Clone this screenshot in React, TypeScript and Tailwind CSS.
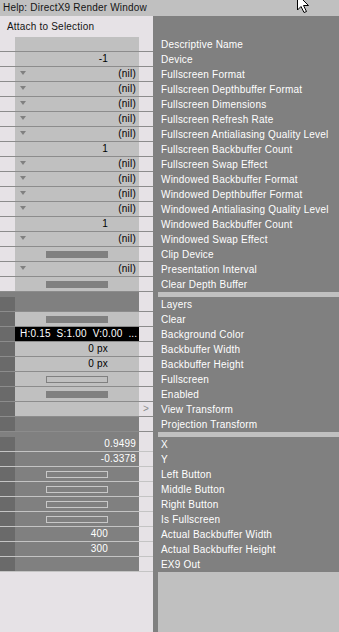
import React from "react";

type Kind =
  | { t: "empty" }
  | { t: "num"; v: string }
  | { t: "nil" }
  | { t: "bar" }
  | { t: "box" }
  | { t: "dark" }
  | { t: "color"; v: string }
  | { t: "float"; v: string }
  | { t: "link" };

type Theme = "a" | "b" | "c";

type Pin = { label: string; kind: Kind };

const section1: Pin[] = [
  { label: "Descriptive Name", kind: { t: "empty" } },
  { label: "Device", kind: { t: "num", v: "-1" } },
  { label: "Fullscreen Format", kind: { t: "nil" } },
  { label: "Fullscreen Depthbuffer Format", kind: { t: "nil" } },
  { label: "Fullscreen Dimensions", kind: { t: "nil" } },
  { label: "Fullscreen Refresh Rate", kind: { t: "nil" } },
  { label: "Fullscreen Antialiasing Quality Level", kind: { t: "nil" } },
  { label: "Fullscreen Backbuffer Count", kind: { t: "num", v: "1" } },
  { label: "Fullscreen Swap Effect", kind: { t: "nil" } },
  { label: "Windowed Backbuffer Format", kind: { t: "nil" } },
  { label: "Windowed Depthbuffer Format", kind: { t: "nil" } },
  { label: "Windowed Antialiasing Quality Level", kind: { t: "nil" } },
  { label: "Windowed Backbuffer Count", kind: { t: "num", v: "1" } },
  { label: "Windowed Swap Effect", kind: { t: "nil" } },
  { label: "Clip Device", kind: { t: "bar" } },
  { label: "Presentation Interval", kind: { t: "nil" } },
  { label: "Clear Depth Buffer", kind: { t: "bar" } },
];

const section2: Pin[] = [
  { label: "Layers", kind: { t: "dark" } },
  { label: "Clear", kind: { t: "bar" } },
  { label: "Background Color", kind: { t: "color", v: "H:0.15  S:1.00  V:0.00  ..." } },
  { label: "Backbuffer Width", kind: { t: "num", v: "0 px" } },
  { label: "Backbuffer Height", kind: { t: "num", v: "0 px" } },
  { label: "Fullscreen", kind: { t: "box" } },
  { label: "Enabled", kind: { t: "bar" } },
  { label: "View Transform", kind: { t: "link" } },
  { label: "Projection Transform", kind: { t: "dark" } },
];

const section3: Pin[] = [
  { label: "X", kind: { t: "float", v: "0.9499" } },
  { label: "Y", kind: { t: "float", v: "-0.3378" } },
  { label: "Left Button", kind: { t: "box" } },
  { label: "Middle Button", kind: { t: "box" } },
  { label: "Right Button", kind: { t: "box" } },
  { label: "Is Fullscreen", kind: { t: "box" } },
  { label: "Actual Backbuffer Width", kind: { t: "num", v: "400" } },
  { label: "Actual Backbuffer Height", kind: { t: "num", v: "300" } },
  { label: "EX9 Out", kind: { t: "empty" } },
];

// value cell of one input/output pin
const Value = ({ kind, theme }: { kind: Kind; theme: Theme }) => {
  const bg = theme === "c" ? "bg-[#808080] text-white" : "bg-[#c0c0c0] text-black";
  switch (kind.t) {
    case "num":
      return <div className={`w-[124px] flex items-center justify-end pr-[31px] ${bg}`}>{kind.v}</div>;
    case "float":
      return <div className={`w-[124px] flex items-center justify-end pr-[3px] ${bg}`}>{kind.v}</div>;
    case "nil":
      return (
        <div className={`relative w-[124px] flex items-center justify-end pr-[3px] ${bg}`}>
          <svg className="absolute left-[5px] top-[4px]" width="6" height="4" viewBox="0 0 6 4">
            <path d="M0 0 H6 L3 4 Z" fill="#808080" />
          </svg>
          (nil)
        </div>
      );
    case "bar":
      return (
        <div className={`w-[124px] flex items-center justify-center ${bg}`}>
          <div className="w-[62px] h-[7px] bg-[#808080]" />
        </div>
      );
    case "box":
      return (
        <div className={`w-[124px] flex items-center justify-center ${bg}`}>
          <div
            className={`w-[62px] h-[7px] border ${theme === "c" ? "border-[#c8c8c8]" : "border-[#808080]"}`}
          />
        </div>
      );
    case "dark":
      return <div className="w-[124px] bg-[#808080]" />;
    case "color":
      return (
        <div className="w-[124px] flex items-center pl-[5px] bg-black text-white whitespace-pre overflow-hidden">
          {kind.v}
        </div>
      );
    default:
      return <div className={`w-[124px] ${bg}`} />;
  }
};

const PinRow = ({ pin, theme, first }: { pin: Pin; theme: Theme; first?: boolean }) => {
  const strip = theme === "a" ? "bg-[#e6e2e6]" : "bg-[#6a6a6a]";
  const line = theme === "c" ? "border-[#c4c4c4]" : "border-[#8c8c8c]";
  return (
    <div className={`flex h-[15px] border-b ${line} ${first ? "" : ""}`}>
      <div className={`w-[15px] ${strip}`} />
      <Value kind={pin.kind} theme={theme} />
      <div className="w-[14px] flex items-center justify-center text-[#8c8c8c] bg-[#e6e2e6]">
        {pin.kind.t === "link" ? ">" : ""}
      </div>
    </div>
  );
};

const Separator = () => (
  <div className="flex h-[5px]">
    <div className="w-[139px] bg-[#808080]" />
    <div className="flex-1" />
  </div>
);

const LabelRow = ({ label }: { label: string }) => (
  <div className="h-[15px] flex items-center pl-[8px] whitespace-nowrap">{label}</div>
);

const LabelSeparator = () => (
  <div className="h-[5px] pl-[5px]">
    <div className="h-full bg-[#c0c0c0]" />
  </div>
);

export default function App() {
  return (
    <div
      className="relative w-[339px] h-[632px] flex flex-col overflow-hidden text-[10px] leading-none tracking-[0.2px] select-none"
      style={{ fontFamily: '"Liberation Sans", Arial, sans-serif' }}
    >
      {/* Title bar */}
      <div className="h-[16px] bg-[#c0c0c0] flex items-center pl-[3px] text-[#141414]">
        Help: DirectX9 Render Window
      </div>

      <div className="flex flex-1">
        {/* Pin values */}
        <div className="w-[153px] bg-[#e6e2e6] flex flex-col">
          <div className="h-[21px] flex items-center pl-[7px] text-[#141414]">Attach to Selection</div>
          {section1.map((p) => (
            <PinRow key={p.label} pin={p} theme="a" />
          ))}
          <Separator />
          {section2.map((p) => (
            <PinRow key={p.label} pin={p} theme="b" />
          ))}
          <Separator />
          {section3.map((p) => (
            <PinRow key={p.label} pin={p} theme="c" />
          ))}
        </div>

        {/* Pin names */}
        <div className="flex-1 flex flex-col bg-[#808080] text-white">
          <div className="h-[21px]" />
          {section1.map((p) => (
            <LabelRow key={p.label} label={p.label} />
          ))}
          <LabelSeparator />
          {section2.map((p) => (
            <LabelRow key={p.label} label={p.label} />
          ))}
          <LabelSeparator />
          {section3.map((p) => (
            <LabelRow key={p.label} label={p.label} />
          ))}
          <div className="flex-1 pl-[5px]">
            <div className="h-full bg-[#c0c0c0]" />
          </div>
        </div>
      </div>

      {/* mouse cursor */}
      <svg className="absolute left-[297px] top-[-6px]" width="13" height="20" viewBox="0 0 13 20">
        <path d="M0.5 0.5 V16 L4 12.5 L7 18.5 L9.5 17.5 L6.5 11.5 H11.5 Z" fill="white" stroke="black" strokeWidth="1" />
      </svg>
    </div>
  );
}
